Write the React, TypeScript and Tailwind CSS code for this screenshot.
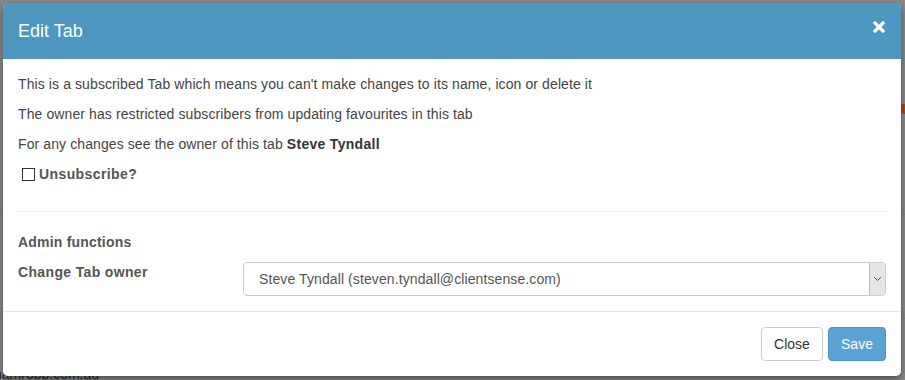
import React from "react";

export default function App() {
  return (
    <div
      className="relative h-[380px] w-[905px] overflow-hidden bg-[#8c8c8c]"
      style={{ fontFamily: '"Liberation Sans", Arial, sans-serif' }}
    >
      {/* page content behind the backdrop */}
      <div className="absolute left-0 top-[214px] h-px w-[905px] bg-[#7f7f7f]" />
      <div className="absolute left-0 top-[318px] h-px w-[905px] bg-[#7f7f7f]" />
      <div className="absolute right-0 top-[104px] h-[10px] w-[6px] rounded-l-full bg-[#b4461c]" />
      <div className="absolute left-[-6px] top-[364px] text-[14px] leading-[20px] text-[#2a2a2a]">
        hamrobb.com.au
      </div>

      {/* modal */}
      <div className="relative ml-[3px] mt-[3px] w-[898px] overflow-hidden rounded-[5px] bg-white shadow-[0_3px_9px_rgba(0,0,0,0.5)]">
        <div className="flex h-[56px] items-center justify-between bg-[#4e97c0] pl-[15px] pr-[16px]">
          <h4 className="text-[18px] leading-[20px] text-white">Edit Tab</h4>
          <svg width="12" height="12" viewBox="0 0 12 12" className="mt-[-8px]">
            <path d="M2 2 L10 10 M10 2 L2 10" stroke="white" strokeWidth="3.2" strokeLinecap="square" />
          </svg>
        </div>

        <div className="px-[15px] pt-[15px] pb-[15px] text-[14px] leading-[20px] tracking-[0.1px] text-[#444]">
          <p>This is a subscribed Tab which means you can't make changes to its name, icon or delete it</p>
          <p className="mt-[10px]">The owner has restricted subscribers from updating favourites in this tab</p>
          <p className="mt-[10px]">
            For any changes see the owner of this tab{" "}
            <b className="tracking-[0.3px] text-[#333]">Steve Tyndall</b>
          </p>
          <div className="mt-[10px] flex items-center pl-[4px]">
            <span className="mr-[4px] inline-block h-[13px] w-[13px] border border-[#333] bg-white" />
            <b className="tracking-[0.4px] text-[#555]">Unsubscribe?</b>
          </div>
          <div className="mt-[27px] h-px bg-[#eee]" />
          <div className="mt-[20px] font-bold tracking-[0.2px] text-[#555]">Admin functions</div>
          <div className="mt-[10px] flex items-start">
            <div className="w-[225px] font-bold tracking-[0.35px] text-[#555]">Change Tab owner</div>
            <div className="flex h-[34px] flex-1 items-stretch overflow-hidden rounded-[4px] border border-[#ccc] bg-white">
              <div className="flex flex-1 items-center pl-[15px] text-[14px] text-[#555]">
                Steve Tyndall (steven.tyndall@clientsense.com)
              </div>
              <div className="flex w-[16px] items-center justify-center border-l border-[#bbb] bg-[#e6e6e6]">
                <svg width="9" height="6" viewBox="0 0 9 6">
                  <path d="M1 1 L4.5 4.5 L8 1" fill="none" stroke="#555" strokeWidth="1" />
                </svg>
              </div>
            </div>
          </div>
        </div>

        <div className="flex justify-end gap-[5px] border-t border-[#e5e5e5] px-[15px] pt-[15px] pb-[15px]">
          <button className="h-[34px] w-[62px] rounded-[4px] border border-[#ccc] bg-white text-[14px] text-[#333]">
            Close
          </button>
          <button className="h-[34px] w-[58px] rounded-[4px] border border-[#4d96c9] bg-[#5aa3d4] text-[14px] text-white">
            Save
          </button>
        </div>
      </div>
    </div>
  );
}
